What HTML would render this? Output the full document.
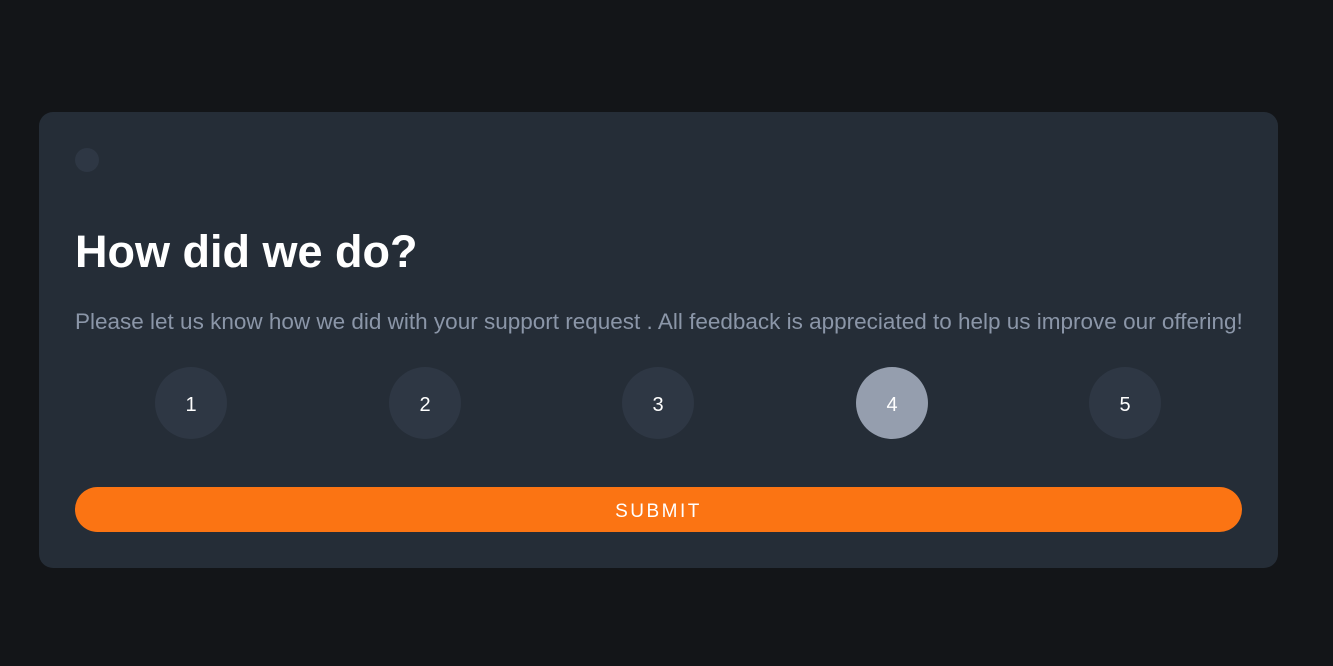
<!DOCTYPE html>
<html><head><style>
body{margin:0;background:#131518;width:1333px;height:666px;overflow:hidden;font-family:"Liberation Sans",sans-serif}
.card{position:absolute;left:39px;top:112px;width:1239px;height:456px;background:#252d37;border-radius:14px}
.dot{position:absolute;left:36px;top:36px;width:24px;height:24px;border-radius:50%;background:#2e3744}
h1{position:absolute;left:36px;top:116px;margin:0;color:#fff;font-size:45px;font-weight:bold;line-height:48px}
p{position:absolute;left:36px;top:195px;margin:0;color:#8b96a8;font-size:22.5px;line-height:29px;white-space:nowrap}
.r{position:absolute;top:255px;width:72px;height:72px;border-radius:50%;background:#2e3744;color:#fff;font-size:20px;line-height:76px;text-align:center}
.r.a{background:#959eae}
.btn{position:absolute;left:36px;top:375px;width:1167px;height:45px;border-radius:23px;background:#fb7413;color:#fff;font-size:19px;letter-spacing:2.5px;line-height:49px;text-align:center}
</style></head><body>
<div class="card">
<div class="dot"></div>
<h1>How did we do?</h1>
<p>Please let us know how we did with your support request . All feedback is appreciated to help us improve our offering!</p>
<div class="r" style="left:116px">1</div>
<div class="r" style="left:350px">2</div>
<div class="r" style="left:583px">3</div>
<div class="r a" style="left:817px">4</div>
<div class="r" style="left:1050px">5</div>
<div class="btn">SUBMIT</div>
</div>
</body></html>
